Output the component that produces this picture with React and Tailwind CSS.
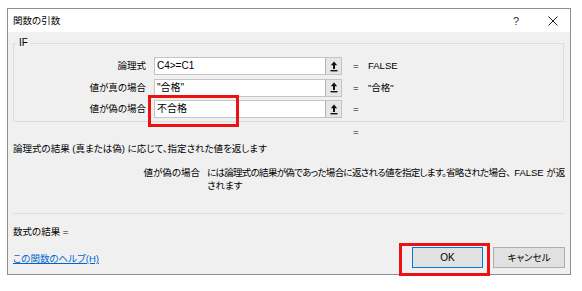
const ARGS = [
  { label: '論理式', value: 'C4>=C1', result: 'FALSE' },
  { label: '値が真の場合', value: '"合格"', result: '"合格"' },
  { label: '値が偽の場合', value: '不合格', result: '' },
]

function RefButton() {
  return (
    <div className="w-[16px] h-full bg-[#e6e6e6] border-l border-[#b4b4b4] flex items-center justify-center">
      <svg width="8" height="11" viewBox="0 0 8 11">
        <path d="M4 0.5 L7.2 4.2 H5 V8 H3 V4.2 H0.8 Z" fill="#111" />
        <rect x="0.5" y="9" width="7" height="1.4" fill="#111" />
      </svg>
    </div>
  )
}

function ArgRow({ label, value, result }) {
  return (
    <div className="flex items-center h-[18px]">
      <div className="w-[132px] text-right">{label}</div>
      <div className="ml-[8px] w-[188px] h-[18px] flex border border-[#c4c4c4] bg-white">
        <div className="flex-1 pl-[2px] leading-[16px] text-[10px]">{value}</div>
        <RefButton />
      </div>
      <div className="ml-[11px] w-[15px]">=</div>
      <div>{result}</div>
    </div>
  )
}

export default function App() {
  return (
    <div className="relative w-[582px] h-[291px] bg-white overflow-hidden text-black text-[9.5px] leading-[12px] font-['Liberation_Sans','Noto_Sans_CJK_JP',sans-serif] [font-feature-settings:'palt']">
      <div className="ml-[7px] mt-[8px] w-[564px] h-[267px] border border-[#8e8e8e] flex flex-col">
        {/* title bar */}
        <div className="shrink-0 h-[23px] bg-white flex items-center pl-[5px] pr-[12px]">
          <span className="flex-1">関数の引数</span>
          <span className="text-[11px] text-[#333] mr-[29px]">?</span>
          <svg width="10" height="10" viewBox="0 0 10 10">
            <path d="M0.5 0.5 L9.5 9.5 M9.5 0.5 L0.5 9.5" stroke="#222" strokeWidth="1" />
          </svg>
        </div>

        {/* body */}
        <div className="flex-1 min-h-0 bg-[#f0f0f0] flex flex-col">
          <fieldset className="mt-[5px] ml-[5px] mr-[6px] border border-[#dcdcdc] px-0 pt-[8px] pb-[3px]">
            <legend className="ml-[3px] px-[2px] leading-[12px] text-[10px]">IF</legend>
            <div className="flex flex-col gap-[3.5px]">
              {ARGS.map((a) => (
                <ArgRow key={a.label} {...a} />
              ))}
            </div>
          </fieldset>

          <div className="mt-[4px] h-[12px] pl-[345px]">=</div>

          <div className="mt-[5px] pl-[5px] h-[12px]">
            論理式の結果 (真または偽) に応じて、指定された値を返します
          </div>

          <div className="mt-[11px] flex leading-[13px]">
            <div className="w-[192px] text-right shrink-0">値が偽の場合</div>
            <div className="ml-[7px] whitespace-nowrap">
              <span className="tracking-[-0.7px]">
                には論理式の結果が偽であった場合に返される値を指定します。省略された場合、
              </span>
              <span className="ml-[4px]">FALSE が返</span>
              <br />
              されます
            </div>
          </div>

          <div className="mt-[21px] mx-[5px] h-px bg-[#dedede]" />

          <div className="mt-[12px] pl-[5px] h-[12px]">数式の結果 =</div>

          <div className="mt-[9px] flex items-center pl-[5px] pr-[5px]">
            <a href="#" className="flex-1 pt-[3px] text-[#0066cc] underline">
              この関数のヘルプ(H)
            </a>
            <button className="w-[71px] h-[21px] border border-[#0078d7] bg-[#e1e1e1] text-[10px]">OK</button>
            <button className="ml-[10px] w-[72px] h-[21px] border border-[#adadad] bg-[#e1e1e1]">キャンセル</button>
          </div>
        </div>
      </div>

      {/* annotation boxes */}
      <div className="absolute left-[148px] top-[95px] w-[91px] h-[32px] border-[3px] border-[#ee1111]" />
      <div className="absolute left-[399px] top-[243px] w-[91px] h-[33px] border-[3px] border-[#ee1111]" />
    </div>
  )
}
